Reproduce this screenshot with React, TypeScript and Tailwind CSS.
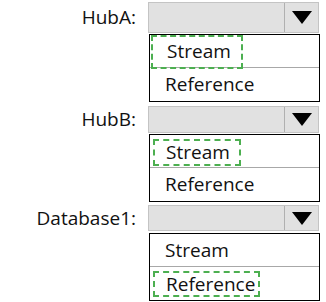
import React from "react";

type Block = {
  label: string;
  selected: 0 | 1;
  rowTop: string;
  listTop: string;
  barH: string;
  boxClass: string;
};

const blocks: Block[] = [
  {
    label: "HubA:",
    selected: 0,
    rowTop: "mt-[2px]",
    listTop: "mt-[1px]",
    barH: "h-[31px]",
    boxClass: "ml-[1px] mt-[1px] h-[34px] w-[92px] pl-[14px]",
  },
  {
    label: "HubB:",
    selected: 0,
    rowTop: "mt-[4px]",
    listTop: "mt-[1px]",
    barH: "h-[27px]",
    boxClass: "ml-[3px] mt-[3px] h-[27px] w-[88px] pl-[11px]",
  },
  {
    label: "Database1:",
    selected: 1,
    rowTop: "mt-[3px]",
    listTop: "mt-[2px]",
    barH: "h-[26px]",
    boxClass: "ml-[3px] mt-[1px] h-[26px] w-[107px] pl-[11px]",
  },
];

const options = ["Stream", "Reference"];

function Arrow() {
  return (
    <svg width="20" height="13" viewBox="0 0 20 13">
      <polygon points="0,0 20,0 10,13" fill="#000" />
    </svg>
  );
}

function Dropdown({ block }: { block: Block }) {
  return (
    <div className={block.rowTop}>
      <div className="flex items-center">
        <div className="w-[148px] pr-[12px] text-right">{block.label}</div>
        <div
          className={`flex w-[171px] ${block.barH} border border-[#c4c4c4] bg-[#e1e1e1]`}
        >
          <div className="flex-1" />
          <div className="flex w-[34px] items-center justify-center border-l border-[#b0b0b0]">
            <Arrow />
          </div>
        </div>
      </div>
      <div
        className={`${block.listTop} ml-[149px] w-[171px] border border-black bg-white`}
      >
        {options.map((opt, i) => (
          <div
            key={opt}
            className={`flex h-[33px] items-center ${i === 0 ? "border-b border-[#a8a8a8]" : ""}`}
          >
            {block.selected === i ? (
              <span
                className={`flex items-center border-2 border-dashed border-[#4caf50] ${block.boxClass}`}
              >
                {opt}
              </span>
            ) : (
              <span className="pl-[15px]">{opt}</span>
            )}
          </div>
        ))}
      </div>
    </div>
  );
}

export default function App() {
  return (
    <div className="h-[302px] w-[326px] overflow-hidden bg-white font-['Open_Sans',sans-serif] text-[19px] leading-none text-[#111]">
      {blocks.map(b => (
        <Dropdown key={b.label} block={b} />
      ))}
    </div>
  );
}
